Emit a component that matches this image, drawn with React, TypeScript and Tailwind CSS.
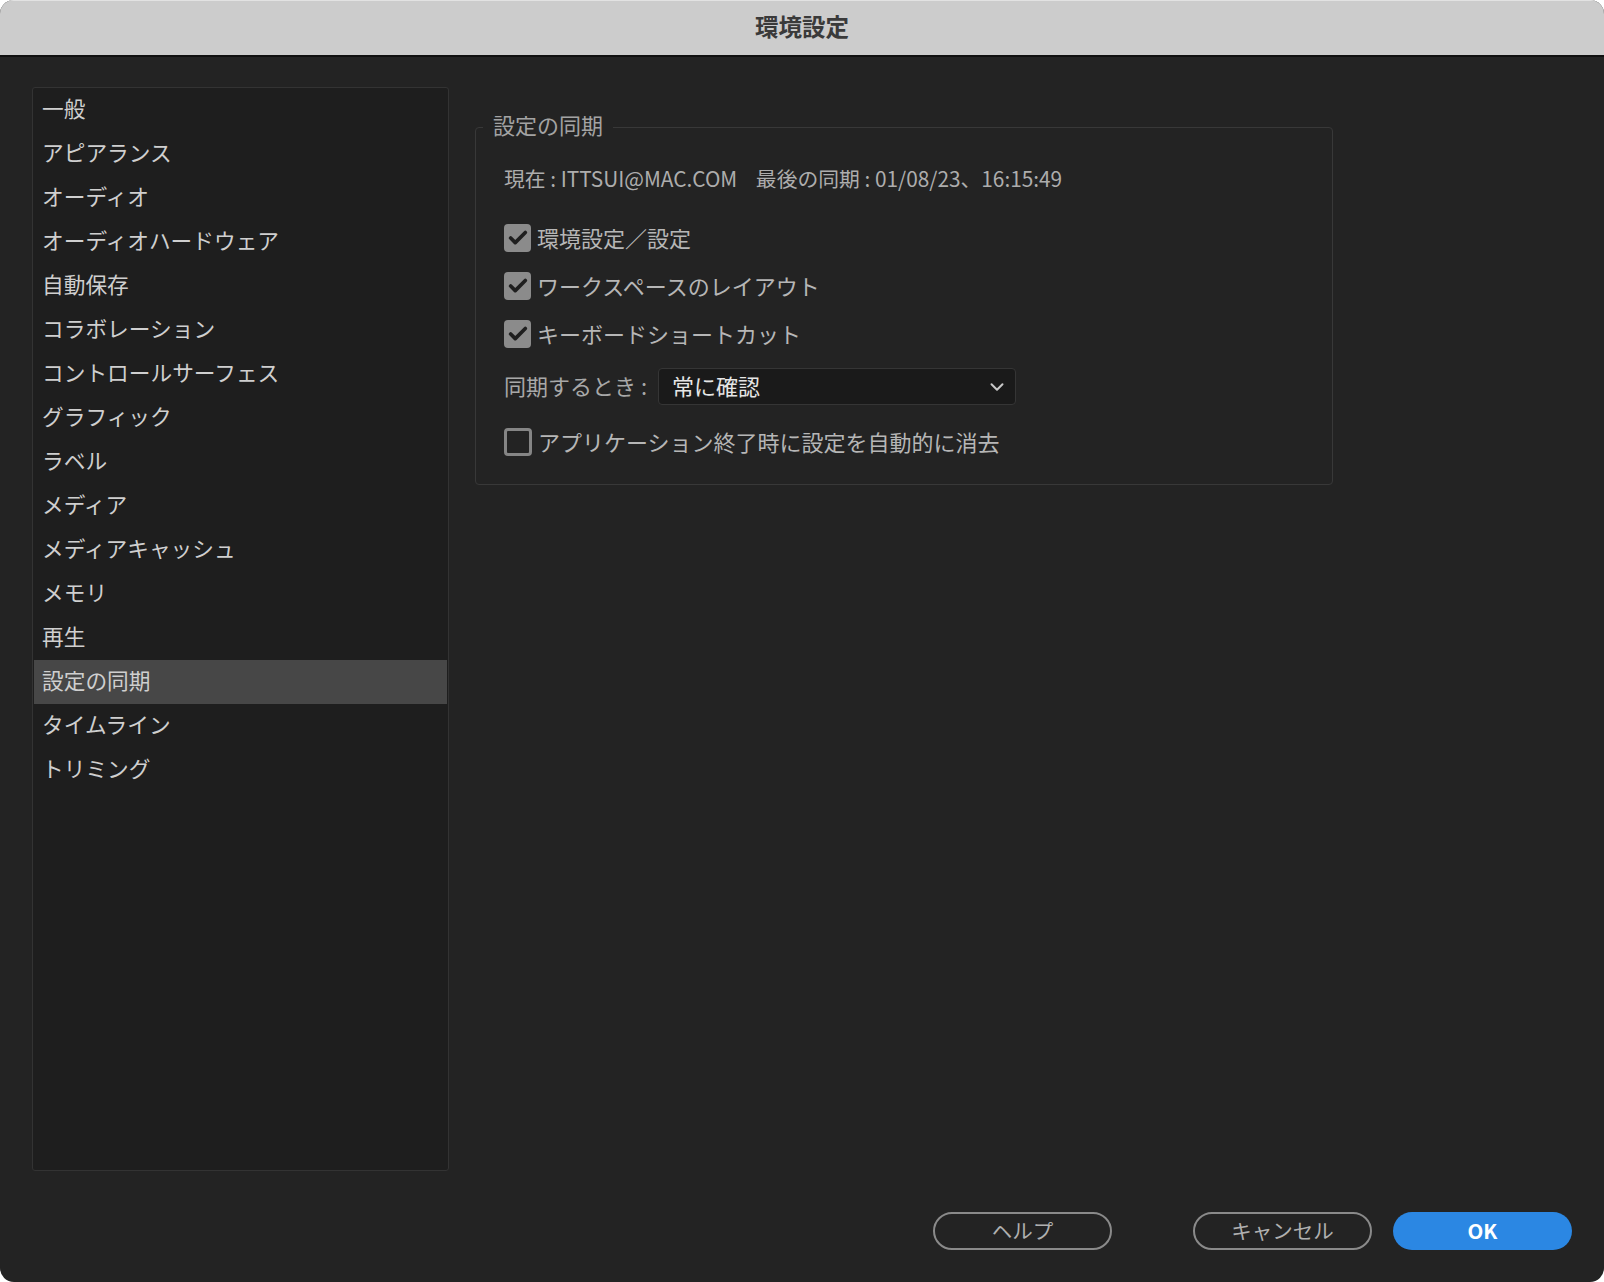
import { Check, ChevronDown } from 'lucide-react';

const font = { fontFamily: '"Noto Sans CJK JP", "Noto Sans", sans-serif' };

const categories = [
  '一般',
  'アピアランス',
  'オーディオ',
  'オーディオハードウェア',
  '自動保存',
  'コラボレーション',
  'コントロールサーフェス',
  'グラフィック',
  'ラベル',
  'メディア',
  'メディアキャッシュ',
  'メモリ',
  '再生',
  '設定の同期',
  'タイムライン',
  'トリミング',
];

const selected = '設定の同期';

function CheckRow({ label, checked }: { label: string; checked: boolean }) {
  return (
    <div className="flex items-center h-[48px] gap-[6px]">
      {checked ? (
        <div className="w-[27px] h-[28px] rounded-[4px] bg-[#8b8b8b] flex items-center justify-center">
          <Check className="w-[22px] h-[22px] text-[#1f1f1f]" strokeWidth={4} />
        </div>
      ) : (
        <div className="w-[28px] h-[28px] rounded-[4px] border-[3px] border-[#858585]" />
      )}
      <span className="text-[22px] text-[#b6b6b6] leading-none pb-[3px]">{label}</span>
    </div>
  );
}

export default function App() {
  return (
    <div className="w-[1604px] h-[1282px] bg-white" style={font}>
      <div className="w-full h-full rounded-[14px] overflow-hidden flex flex-col bg-[#232323]">
        <div className="h-[57px] shrink-0 bg-[#cccccc] border-t border-[#e2e2e2] border-b-2 border-b-[#101010] flex items-center justify-center pb-[2px]">
          <span className="text-[23.5px] font-bold text-[#3a3a3a] leading-none">環境設定</span>
        </div>

        <div className="flex-1 flex flex-col px-[32px] pt-[30px] pb-[32px]">
          <div className="flex h-[1084px]">
            <div className="w-[417px] h-full border border-[#333333] rounded-[3px] bg-[#1e1e1e] px-[1px]">
              {categories.map(c => (
                <div
                  key={c}
                  className={
                    'h-[44px] flex items-center pl-[8px] pb-[3px] text-[21.7px] text-[#cfcfcf] ' +
                    (c === selected ? 'bg-[#474747]' : '')
                  }
                >
                  {c}
                </div>
              ))}
            </div>

            <div className="ml-[26px] pt-[40px]">
              <div className="relative w-[858px] h-[358px] border border-[#383838] rounded-[4px] pl-[28px] pt-[37px]">
                <span className="absolute -top-[19px] left-[7px] px-[10px] bg-[#232323] text-[22px] leading-[30px] text-[#a3a3a3]">
                  設定の同期
                </span>

                <div className="h-[30px] flex items-center pb-[3px] text-[20.8px] text-[#adadad] whitespace-pre">
                  現在 : ITTSUI@MAC.COM{'    '}最後の同期 : 01/08/23、16:15:49
                </div>

                <div className="mt-[19px]">
                  <CheckRow label="環境設定／設定" checked />
                  <CheckRow label="ワークスペースのレイアウト" checked />
                  <CheckRow label="キーボードショートカット" checked />
                </div>

                <div className="mt-[10px] flex items-center h-[37px]">
                  <span className="w-[154px] text-[22px] text-[#a8a8a8] pb-[2px]">同期するとき :</span>
                  <div className="w-[358px] h-[37px] bg-[#1a1a1a] border border-[#353535] rounded-[4px] flex items-center justify-between pl-[13px] pr-[7px]">
                    <span className="text-[22px] text-[#e6e6e6] pb-[2px]">常に確認</span>
                    <ChevronDown className="w-[22px] h-[22px] text-[#c8c8c8]" strokeWidth={2.2} />
                  </div>
                </div>

                <div className="mt-[13px]">
                  <CheckRow label="アプリケーション終了時に設定を自動的に消去" checked={false} />
                </div>
              </div>
            </div>
          </div>

          <div className="mt-[41px] h-[38px] flex justify-end">
            <button className="w-[179px] h-[38px] rounded-full border-2 border-[#8a8a8a] text-[20.5px] text-[#b0b0b0] pb-[2px]">
              ヘルプ
            </button>
            <button className="ml-[81px] w-[179px] h-[38px] rounded-full border-2 border-[#8a8a8a] text-[20.5px] text-[#b0b0b0] pb-[2px]">
              キャンセル
            </button>
            <button className="ml-[21px] w-[179px] h-[38px] rounded-full bg-[#2b87e3] text-[20.5px] font-semibold text-white pb-[2px]">
              OK
            </button>
          </div>
        </div>
      </div>
    </div>
  );
}
